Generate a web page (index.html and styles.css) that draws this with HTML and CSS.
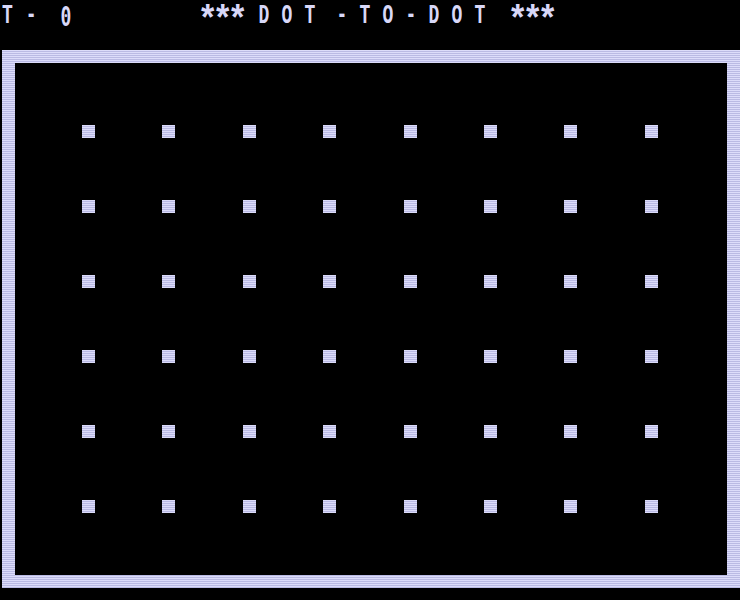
FILE: index.html
```html
<!DOCTYPE html>
<html lang="en">
<head>
  <meta charset="utf-8">
  <title>Dot-to-Dot</title>
  <link rel="stylesheet" href="styles.css">
</head>
<body>
  <div class="screen">
    <!-- Top line: turn counter and title -->
    <div class="topline">
      <span class="txt turn">T-</span>
      <span class="txt count">0</span>
      <span class="txt stars first">***</span>
      <span class="txt word dot1">DOT</span>
      <span class="txt word dot2">-TO-DOT</span>
      <span class="txt stars last">***</span>
    </div>

    <!-- Playing field -->
    <div class="frame">
      <div class="field">
        <div class="grid">
          <i></i><i></i><i></i><i></i><i></i><i></i><i></i><i></i>
          <i></i><i></i><i></i><i></i><i></i><i></i><i></i><i></i>
          <i></i><i></i><i></i><i></i><i></i><i></i><i></i><i></i>
          <i></i><i></i><i></i><i></i><i></i><i></i><i></i><i></i>
          <i></i><i></i><i></i><i></i><i></i><i></i><i></i><i></i>
          <i></i><i></i><i></i><i></i><i></i><i></i><i></i><i></i>
        </div>
      </div>
    </div>
  </div>
</body>
</html>
```

FILE: styles.css
```css
* {
  margin: 0;
  padding: 0;
  box-sizing: border-box;
}

body {
  width: 740px;
  height: 600px;
  background: #000;
  overflow: hidden;
  font-family: "Liberation Mono", "DejaVu Sans Mono", monospace;
}

.screen {
  width: 740px;
  height: 600px;
}

/* header text, stretched tall like the old 40-column font */
.topline {
  height: 50px;
  display: flex;
  align-items: flex-start;
}

.txt {
  display: inline-block;
  font-size: 18px;
  font-weight: bold;
  line-height: normal;
  color: #d8d8f8;
  transform: scaleY(1.52);
  transform-origin: left top;
  white-space: pre;
}

.turn {
  margin-left: 2px;
  letter-spacing: 13px;
}

.count {
  margin-left: 11px;
  font-family: "DejaVu Sans Mono", monospace;
}

.stars {
  font-size: 34px;
  letter-spacing: -5.4px;
  transform: scaleY(1.1);
}

.first {
  margin-left: 126px;
}

.word {
  letter-spacing: 12.2px;
}

.dot1 {
  margin-left: 16px;
}

.dot2 {
  margin-left: 9px;
}

.last {
  margin-left: 10px;
}

/* scanline fill for everything lit on screen */
.frame {
  margin-left: 2px;
  width: 738px;
  height: 538px;
  padding: 13px;
  background: repeating-linear-gradient(#dcdcfa 0 1px, #babae4 1px 2px);
}

.field {
  width: 100%;
  height: 100%;
  background: #000;
  padding: 62px 0 0 67px;
}

.grid {
  display: grid;
  grid-template-columns: repeat(8, 13px);
  grid-auto-rows: 13px;
  column-gap: 67.4px;
  row-gap: 62px;
}

.grid i {
  display: block;
  background: repeating-linear-gradient(#dcdcfa 0 1px, #babae4 1px 2px);
}
```
